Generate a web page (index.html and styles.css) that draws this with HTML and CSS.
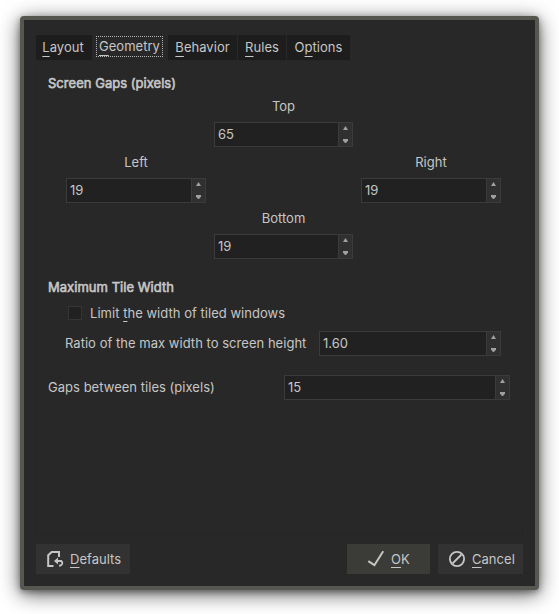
FILE: index.html
```html
<!DOCTYPE html>
<html lang="en">
<head>
<meta charset="utf-8">
<title>Tiling settings</title>
<link rel="stylesheet" href="styles.css">
</head>
<body>
<main class="window">
  <nav class="tabs">
    <span class="tab layout"><u>L</u>ayout</span>
    <span class="tab active"><u>G</u>eometry</span>
    <span class="tab behavior"><u>B</u>ehavior</span>
    <span class="tab rules"><u>R</u>ules</span>
    <span class="tab options">O<u>p</u>tions</span>
  </nav>
  <section class="pane">
    <h2 class="gaps-title">Screen Gaps (pixels)</h2>
    <div class="gaps">
      <div class="field top"><label>Top</label><div class="spin"><span class="value">65</span><span class="arrows"><i class="up"></i><i class="down"></i></span></div></div>
      <div class="field left"><label>Left</label><div class="spin"><span class="value">19</span><span class="arrows"><i class="up"></i><i class="down"></i></span></div></div>
      <div class="field right"><label>Right</label><div class="spin"><span class="value">19</span><span class="arrows"><i class="up"></i><i class="down"></i></span></div></div>
      <div class="field bottom"><label>Bottom</label><div class="spin"><span class="value">19</span><span class="arrows"><i class="up"></i><i class="down"></i></span></div></div>
    </div>
    <h2 class="width-title">Maximum Tile Width</h2>
    <div class="check-row"><span class="checkbox"></span><span class="check-label">Limit <u>t</u>he width of tiled windows</span></div>
    <div class="row ratio"><label class="ratio-label">Ratio of the max width to screen height</label><div class="spin"><span class="value">1.60</span><span class="arrows"><i class="up"></i><i class="down"></i></span></div></div>
    <div class="row tile-gaps"><label class="tile-label">Gaps between tiles (pixels)</label><div class="spin"><span class="value">15</span><span class="arrows"><i class="up"></i><i class="down"></i></span></div></div>
  </section>
  <footer class="buttons">
    <div class="button defaults">
      <svg width="18" height="18" viewBox="0 0 18 18"><path d="M7.5 16H2.2V5.2L5.7 2H13V7" fill="none" stroke="#c6c6c6" stroke-width="2"/><path d="M12 7.5v7L8 11z" fill="#c6c6c6"/><path d="M11 11h4.2l1 1v2l-1.7 1.7H13" fill="none" stroke="#c6c6c6" stroke-width="1.8"/></svg>
      <span><u>D</u>efaults</span>
    </div>
    <div class="button ok">
      <svg width="18" height="18" viewBox="0 0 18 18"><path d="M1.3 11.2L7.4 15.2L16.2 1.2" fill="none" stroke="#c6c6c6" stroke-width="2"/></svg>
      <span><u>O</u>K</span>
    </div>
    <div class="button cancel">
      <svg width="18" height="18" viewBox="0 0 18 18"><circle cx="9" cy="9" r="7.1" fill="none" stroke="#c6c6c6" stroke-width="1.8"/><path d="M4.5 13.5L13.5 4.5" stroke="#c6c6c6" stroke-width="1.8"/></svg>
      <span><u>C</u>ancel</span>
    </div>
  </footer>
</main>
</body>
</html>
```
FILE: styles.css
```css
* { box-sizing: border-box; }
body {
  margin: 0;
  padding: 16px 20px 24px;
  height: 614px;
  overflow: hidden;
  background: #fff;
  color: #c6c6c6;
  font: 13px/16px Inter, "Noto Sans", sans-serif;
  letter-spacing: 0.03px;
}
u {
  text-decoration: underline 1px;
  text-underline-offset: 3px;
  text-decoration-skip-ink: none;
}
.window {
  display: flex;
  flex-direction: column;
  width: 519px;
  height: 574px;
  padding: 15px 12px 12px;
  border: 4px solid #555750;
  border-radius: 4px;
  background: #282828;
  box-shadow: 0 4px 20px rgba(0, 0, 0, 0.65), 0 2px 6px rgba(0, 0, 0, 0.35);
}
.tabs { display: flex; height: 25px; flex: none; }
.tab {
  height: 25px;
  margin-right: 1px;
  padding-top: 4px;
  background: #1d1d1d;
  text-align: center;
}
.tab u { text-underline-offset: 4px; }
.layout { width: 56px; margin-right: 4px; padding-right: 2px; }
.active {
  width: 67px;
  height: 21px;
  margin: 1px 5px 0 0;
  padding-top: 1px;
  border: 1px dotted #b4b4b4;
  background: #282828;
}
.behavior { width: 69px; }
.rules { width: 48px; }
.options { width: 63px; }
.pane {
  height: 476px;
  flex: none;
  padding: 14px 12px 0 11px;
  border: 1px solid #262626;
}
h2 {
  margin: 0;
  font-size: 13px;
  line-height: 16px;
  font-weight: 400;
  -webkit-text-stroke: 0.6px #c6c6c6;
}
.gaps {
  display: grid;
  grid-template-columns: 140px 139px 140px;
  grid-template-rows: 56px 56px 56px;
  column-gap: 8px;
  margin: 7px 0 0 18px;
}
.field { text-align: center; }
.field label { display: block; height: 24px; }
.top { grid-area: 1 / 2; }
.left { grid-area: 2 / 1; }
.right { grid-area: 2 / 3; }
.bottom { grid-area: 3 / 2; }
.spin {
  display: flex;
  height: 25px;
  border: 1px solid #3b3b3b;
  background: #212121;
  text-align: left;
}
.value { flex: 1; padding: 3px 0 0 3px; }
.arrows {
  display: flex;
  flex-direction: column;
  justify-content: space-between;
  align-items: center;
  width: 14px;
  padding: 3px 0;
  border-left: 1px solid #3b3b3b;
  background: #303030;
}
.up, .down { width: 5px; height: 4px; background: #a0a0a0; }
.up { clip-path: polygon(50% 0, 100% 100%, 0 100%); }
.down { clip-path: polygon(0 0, 100% 0, 100% 35%, 60% 100%, 40% 100%, 0 35%); }
.width-title { margin-top: 13px; }
.check-row { display: flex; align-items: center; margin: 10px 0 0 20px; gap: 8px; }
.checkbox { width: 14px; height: 14px; border: 1px solid #353535; background: #212121; }
.row { display: flex; }
.row label { padding-top: 4px; }
.ratio { margin: 10px 0 0 17px; }
.ratio-label { width: 254px; white-space: nowrap; }
.ratio .spin { width: 182px; }
.tile-gaps { margin-top: 19px; }
.tile-label { width: 236px; }
.tile-gaps .spin { width: 226px; }
.buttons { display: flex; gap: 8px; margin-top: 8px; }
.button {
  display: flex;
  align-items: center;
  gap: 6px;
  height: 30px;
  padding-left: 10px;
  background: #323232;
}
.defaults { width: 94px; margin-right: auto; }
.ok { width: 83px; padding-left: 20px; background: #3b3b38; }
.cancel { width: 85px; }
```
